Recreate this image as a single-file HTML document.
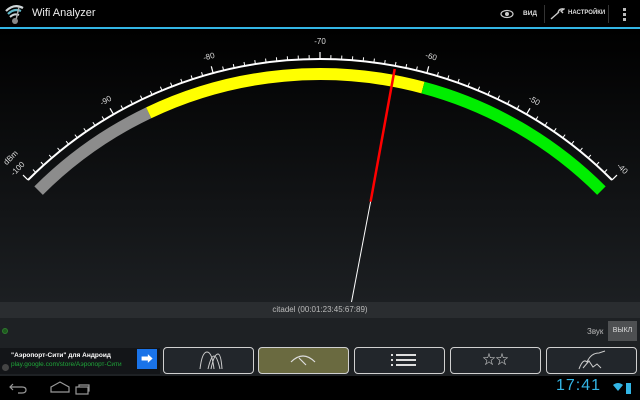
<!DOCTYPE html>
<html><head><meta charset="utf-8"><style>
*{margin:0;padding:0;box-sizing:border-box}
body{width:640px;height:400px;overflow:hidden;background:#000;font-family:"Liberation Sans","Noto Sans CJK SC",sans-serif;position:relative}
.abs{position:absolute}
#bar{left:0;top:0;width:640px;height:27px;background:#000}
#line{left:0;top:27px;width:640px;height:2px;background:#33b5e5}
#main{left:0;top:29px;width:640px;height:273px;background:linear-gradient(#000,#1c1f22)}
#cit{left:0;top:302px;width:640px;height:16px;background:#2a2d30;color:#bbb;font-size:8px;text-align:center;line-height:16px}
#mid{left:0;top:318px;width:640px;height:28px;background:#1e2124}
#tb{left:0;top:346px;width:640px;height:30px;background:#1e2124}
.btn{position:absolute;top:347px;height:27px;width:91px;border:1.5px solid #d0d0d0;border-radius:4px;background:#22262b}
#nav{left:0;top:376px;width:640px;height:24px;background:#000}
</style></head><body>
<div class="abs" id="bar"></div>
<div class="abs" id="line"></div>
<svg class="abs" style="left:4px;top:3px" width="24" height="22" viewBox="0 0 24 22">
<path d="M2 8 Q10 0 19 5" stroke="#cfd6d8" stroke-width="2.2" fill="none"/>
<path d="M4 11 Q10 5 17 8" stroke="#5fb8c8" stroke-width="2.2" fill="none"/>
<path d="M6 14 Q10 10 15 12" stroke="#cfd6d8" stroke-width="2" fill="none"/>
<line x1="15" y1="4" x2="12" y2="17" stroke="#aaa" stroke-width="1.5"/>
<circle cx="11" cy="18" r="3" fill="#888"/>
</svg>
<div class="abs" style="left:32px;top:7px;color:#eee;font-size:11px">Wifi Analyzer</div>
<svg class="abs" style="left:500px;top:9px" width="14" height="10"><ellipse cx="7" cy="5" rx="6" ry="3.5" fill="none" stroke="#ccc" stroke-width="1.2"/><circle cx="7" cy="5" r="2" fill="#ccc"/></svg>
<div class="abs" style="left:523px;top:10px;color:#ddd;font-size:6.5px;font-weight:bold">ВИД</div>
<div class="abs" style="left:544px;top:5px;width:1px;height:18px;background:#333"></div>
<svg class="abs" style="left:549px;top:7px" width="16" height="13"><path d="M2 12 L10 5 M9 6 Q10 1 15 2 L12 4 L14 6" stroke="#ccc" stroke-width="1.4" fill="none"/></svg>
<div class="abs" style="left:568px;top:10px;color:#ddd;font-size:6px;font-weight:bold">НАСТРОЙКИ</div>
<div class="abs" style="left:608px;top:5px;width:1px;height:18px;background:#333"></div>
<div class="abs" style="left:623px;top:8px;width:3px;height:3px;background:#bbb;box-shadow:0 5px #bbb,0 10px #bbb"></div>
<div class="abs" id="main"></div>
<svg class="abs" style="left:0;top:0" width="640" height="302">
<defs><line id="m" x1="320" y1="59" x2="320" y2="55" stroke="#fff" stroke-width="1"/><line id="M" x1="320" y1="59" x2="320" y2="52" stroke="#fff" stroke-width="1.2"/></defs>
<path d="M38.6,190.6 A398,398 0 0 1 148.7,112.8" stroke="#8c8c8c" stroke-width="12" fill="none"/>
<path d="M148.7,112.8 A398,398 0 0 1 423,87.6" stroke="#ffff00" stroke-width="12" fill="none"/>
<path d="M423,87.6 A398,398 0 0 1 601.4,190.6" stroke="#00ee00" stroke-width="12" fill="none"/>
<path d="M28,180 A413,413 0 0 1 612,180" stroke="#fff" stroke-width="2" fill="none"/>
<g>
<use href="#M" transform="rotate(-45 320 472)"/><use href="#M" transform="rotate(-30 320 472)"/><use href="#M" transform="rotate(-15 320 472)"/><use href="#M"/><use href="#M" transform="rotate(15 320 472)"/><use href="#M" transform="rotate(30 320 472)"/><use href="#M" transform="rotate(45 320 472)"/>
<use href="#m" transform="rotate(-43.5 320 472)"/><use href="#m" transform="rotate(-42 320 472)"/><use href="#m" transform="rotate(-40.5 320 472)"/><use href="#m" transform="rotate(-39 320 472)"/><use href="#m" transform="rotate(-37.5 320 472)"/><use href="#m" transform="rotate(-36 320 472)"/><use href="#m" transform="rotate(-34.5 320 472)"/><use href="#m" transform="rotate(-33 320 472)"/><use href="#m" transform="rotate(-31.5 320 472)"/>
<use href="#m" transform="rotate(-28.5 320 472)"/><use href="#m" transform="rotate(-27 320 472)"/><use href="#m" transform="rotate(-25.5 320 472)"/><use href="#m" transform="rotate(-24 320 472)"/><use href="#m" transform="rotate(-22.5 320 472)"/><use href="#m" transform="rotate(-21 320 472)"/><use href="#m" transform="rotate(-19.5 320 472)"/><use href="#m" transform="rotate(-18 320 472)"/><use href="#m" transform="rotate(-16.5 320 472)"/>
<use href="#m" transform="rotate(-13.5 320 472)"/><use href="#m" transform="rotate(-12 320 472)"/><use href="#m" transform="rotate(-10.5 320 472)"/><use href="#m" transform="rotate(-9 320 472)"/><use href="#m" transform="rotate(-7.5 320 472)"/><use href="#m" transform="rotate(-6 320 472)"/><use href="#m" transform="rotate(-4.5 320 472)"/><use href="#m" transform="rotate(-3 320 472)"/><use href="#m" transform="rotate(-1.5 320 472)"/>
<use href="#m" transform="rotate(1.5 320 472)"/><use href="#m" transform="rotate(3 320 472)"/><use href="#m" transform="rotate(4.5 320 472)"/><use href="#m" transform="rotate(6 320 472)"/><use href="#m" transform="rotate(7.5 320 472)"/><use href="#m" transform="rotate(9 320 472)"/><use href="#m" transform="rotate(10.5 320 472)"/><use href="#m" transform="rotate(12 320 472)"/><use href="#m" transform="rotate(13.5 320 472)"/>
<use href="#m" transform="rotate(16.5 320 472)"/><use href="#m" transform="rotate(18 320 472)"/><use href="#m" transform="rotate(19.5 320 472)"/><use href="#m" transform="rotate(21 320 472)"/><use href="#m" transform="rotate(22.5 320 472)"/><use href="#m" transform="rotate(24 320 472)"/><use href="#m" transform="rotate(25.5 320 472)"/><use href="#m" transform="rotate(27 320 472)"/><use href="#m" transform="rotate(28.5 320 472)"/>
<use href="#m" transform="rotate(31.5 320 472)"/><use href="#m" transform="rotate(33 320 472)"/><use href="#m" transform="rotate(34.5 320 472)"/><use href="#m" transform="rotate(36 320 472)"/><use href="#m" transform="rotate(37.5 320 472)"/><use href="#m" transform="rotate(39 320 472)"/><use href="#m" transform="rotate(40.5 320 472)"/><use href="#m" transform="rotate(42 320 472)"/><use href="#m" transform="rotate(43.5 320 472)"/>
</g>
<g fill="#ddd" font-size="8" font-family="Liberation Sans, sans-serif" text-anchor="middle" dominant-baseline="middle">
<text x="18" y="169" transform="rotate(-45 18 169)">-100</text>
<text x="11" y="158" transform="rotate(-45 11 158)">dBm</text>
<text x="106" y="101" transform="rotate(-30 106 101)">-90</text>
<text x="209" y="57" transform="rotate(-15 209 57)">-80</text>
<text x="320" y="42">-70</text>
<text x="431" y="57" transform="rotate(15 431 57)">-60</text>
<text x="534" y="101" transform="rotate(30 534 101)">-50</text>
<text x="622" y="169" transform="rotate(45 622 169)">-40</text>
</g>
<line x1="394.7" y1="69" x2="370.6" y2="201.7" stroke="#ff0000" stroke-width="2.5"/>
<line x1="370.6" y1="201.7" x2="351.5" y2="302" stroke="#fff" stroke-width="1"/>
</svg>
<div class="abs" id="cit">citadel (00:01:23:45:67:89)</div>
<div class="abs" id="mid"></div>
<div class="abs" style="left:2px;top:328px;width:6px;height:6px;border-radius:50%;background:#1d5a1d;border:1px solid #2f7a2f"></div>
<div class="abs" style="left:587px;top:327px;color:#bbb;font-size:8px">Звук</div>
<div class="abs" style="left:608px;top:321px;width:29px;height:20px;background:#4e5052;color:#ddd;font-size:7px;line-height:20px;text-align:center">ВЫКЛ</div>
<div class="abs" id="tb"></div>
<div class="abs" style="left:0;top:348px;width:160px;height:26px;background:#131518"></div>
<div class="abs" style="left:11px;top:352px;color:#fff;font-size:6.5px;font-weight:bold">"Аэропорт-Сити" для Андроид</div>
<div class="abs" style="left:11px;top:361px;color:#1fa83a;font-size:6.5px">play.google.com/store/Аэропорт-Сити</div>
<div class="abs" style="left:2px;top:364px;width:7px;height:7px;border-radius:50%;background:#444"></div>
<div class="abs" style="left:137px;top:349px;width:20px;height:20px;background:#1a73e8;color:#fff;font-size:12px;text-align:center;line-height:20px">➡</div>
<div class="btn" style="left:163px"><svg width="88" height="24"><path d="M36 21 Q38 4 43 4 Q48 4 50 21 M44 21 Q47 8 50 8 Q53 8 56 21 M47 21 Q50 6 54 6 Q57 6 58 21" stroke="#ccc" fill="none" stroke-width="1"/></svg></div>
<div class="btn" style="left:258px;background:#6a6a40"><svg width="88" height="24"><path d="M32 14 Q44 2 56 14 M40 10 L47 17" stroke="#ddd" fill="none" stroke-width="1.2"/></svg></div>
<div class="btn" style="left:354px"><svg width="88" height="24"><path d="M36 7h2M41 7h20M36 12h2M41 12h20M36 17h2M41 17h20" stroke="#ddd" stroke-width="2"/></svg></div>
<div class="btn" style="left:450px;color:#ddd;font-size:13px;text-align:center;line-height:23px">☆☆</div>
<div class="btn" style="left:546px"><svg width="88" height="24"><path d="M32 21 Q36 10 40 14 Q44 5 52 5 L58 3 M36 20 L42 13 L46 19 L50 16 L54 20" stroke="#ccc" fill="none" stroke-width="1"/></svg></div>
<div class="abs" id="nav"></div>
<svg class="abs" style="left:0;top:376px" width="100" height="24">
<path d="M13 8 L10 11 L13 14 M10 11 H22 Q26 11 26 14 Q26 17 22 17 H18" stroke="#999" fill="none" stroke-width="1.2"/>
<path d="M51 11 L60 6 L69 11 V16 H51 Z" stroke="#999" fill="none" stroke-width="1.2"/>
<rect x="76" y="11" width="12" height="7" stroke="#999" fill="none" stroke-width="1.2"/><path d="M79 11 V9 H89 V15 H88" stroke="#999" fill="none" stroke-width="1.2"/>
</svg>
<div class="abs" style="left:556px;top:377px;color:#33b5e5;font-size:16px;letter-spacing:1px">17:41</div>
<svg class="abs" style="left:612px;top:381px" width="28" height="16"><path d="M1 4 Q6 0 11 4 L6 10 Z" fill="#33b5e5"/><rect x="14" y="2" width="5" height="11" fill="#33b5e5"/></svg>
</body></html>
